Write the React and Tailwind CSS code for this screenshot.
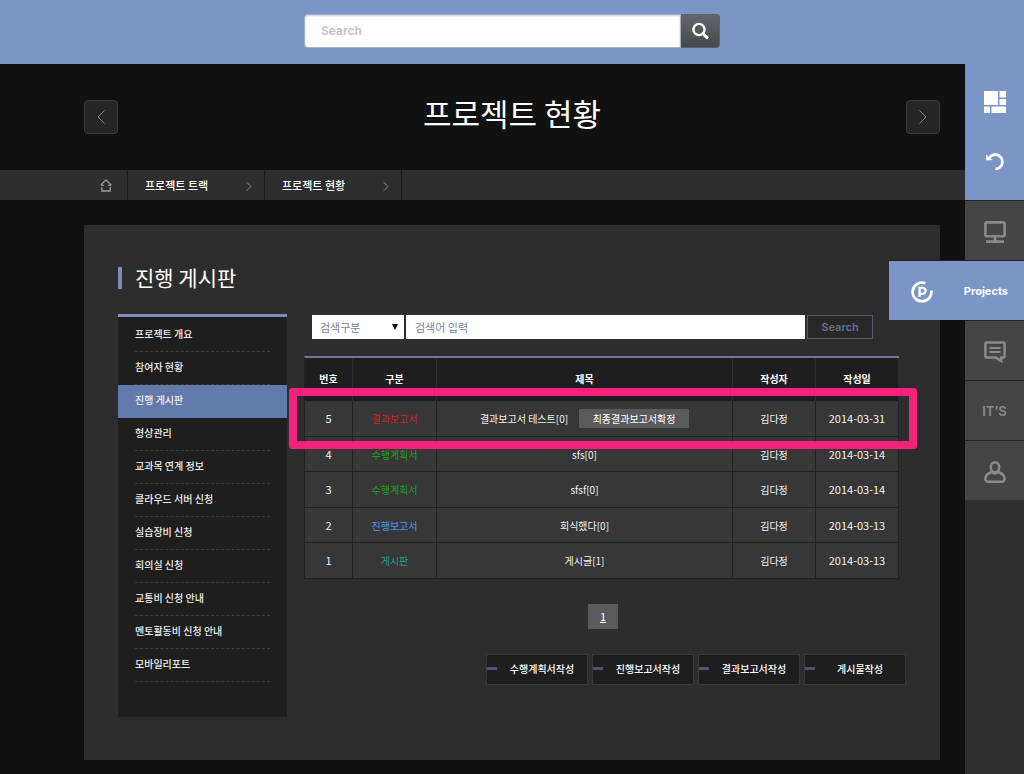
import React from "react";

const MENU = [
  "프로젝트 개요",
  "참여자 현황",
  "진행 게시판",
  "형상관리",
  "교과목 연계 정보",
  "클라우드 서버 신청",
  "실습장비 신청",
  "회의실 신청",
  "교통비 신청 안내",
  "멘토활동비 신청 안내",
  "모바일리포트",
];

const ROWS = [
  { no: 5, kind: "결과보고서", color: "text-[#d62020]", title: "결과보고서 테스트[0]", badge: "최종결과보고서확정", writer: "김다정", date: "2014-03-31" },
  { no: 4, kind: "수행계획서", color: "text-[#1fa01f]", title: "sfs[0]", writer: "김다정", date: "2014-03-14" },
  { no: 3, kind: "수행계획서", color: "text-[#1fa01f]", title: "sfsf[0]", writer: "김다정", date: "2014-03-14" },
  { no: 2, kind: "진행보고서", color: "text-[#4a9cf0]", title: "회식했다[0]", writer: "김다정", date: "2014-03-13" },
  { no: 1, kind: "게시판", color: "text-[#1f9c9c]", title: "게시글[1]", writer: "김다정", date: "2014-03-13" },
];

const ACTIONS = ["수행계획서작성", "진행보고서작성", "결과보고서작성", "게시물작성"];

function Chevron({ left, className }) {
  return (
    <svg viewBox="0 0 8 14" className={className} fill="none" stroke="currentColor" aria-hidden="true">
      <path d={left ? "M7.5 0.5 L1 7 L7.5 13.5" : "M0.5 0.5 L7 7 L0.5 13.5"} vectorEffect="non-scaling-stroke" />
    </svg>
  );
}

function Header() {
  return (
    <header className="flex h-[64px] shrink-0 justify-center bg-[#7a95c6] pt-[14px]">
      <form className="flex h-[34px] w-[416px]" role="search" onSubmit={(e) => e.preventDefault()}>
        <input
          type="text"
          aria-label="Search"
          placeholder="Search"
          className="min-w-0 flex-1 rounded-l border border-[#a9b2c4] bg-white px-4 text-[12px] font-semibold text-gray-600 shadow-[inset_0_1px_2px_rgba(0,0,0,0.2)] outline-none placeholder:text-[#c2c2c8]"
        />
        <button
          type="submit"
          aria-label="Submit search"
          className="flex w-[39px] items-center justify-center rounded-r border border-l-0 border-[#5c616a] bg-linear-to-b from-[#646669] to-[#45484b] text-white"
        >
          <svg viewBox="0 0 18 18" className="size-[18px]" fill="none" stroke="currentColor" aria-hidden="true">
            <circle cx="8" cy="7.5" r="5.6" strokeWidth="2.4" />
            <path d="M12.1 11.6 L16 15.6" strokeWidth="3" strokeLinecap="round" />
          </svg>
        </button>
      </form>
    </header>
  );
}

function TitleBar() {
  const btn = "flex size-[34px] items-center justify-center rounded border border-[#3d3d3d] bg-[#262626] text-[#858585]";
  return (
    <div className="flex h-[106px] items-center justify-between pr-[25px] pl-[84px]">
      <button aria-label="이전" className={btn}>
        <Chevron left className="h-[14px] w-[8px]" />
      </button>
      <h1 className="pb-2 text-[31px] leading-[44px] text-white">프로젝트 현황</h1>
      <button aria-label="다음" className={btn}>
        <Chevron className="h-[14px] w-[8px]" />
      </button>
    </div>
  );
}

function Crumb({ label }) {
  return (
    <a
      href="#"
      className="flex w-[137px] items-center justify-between border-r border-[#1a1a1a] pr-[12px] pl-[17px] text-[11px] font-medium text-white"
    >
      {label}
      <Chevron className="mt-[3px] h-[9px] w-[6px] text-[#8a8a8a]" />
    </a>
  );
}

function Breadcrumb() {
  return (
    <nav aria-label="위치" className="flex h-[30px] bg-[#2e2e2e] pl-[84px]">
      <a href="#" aria-label="홈" className="flex w-[44px] items-center justify-center border-r border-[#1a1a1a] text-[#999]">
        <svg viewBox="0 0 12 13" className="h-[13px] w-[12px]" fill="none" stroke="currentColor" strokeWidth="1.3" aria-hidden="true">
          <path d="M0.8 6 L6 1 L11.2 6 M0.8 6.4 H3.8 M8.2 6.4 H11.2 M1.8 8 V12 H10.2 V8" />
        </svg>
      </a>
      <Crumb label="프로젝트 트랙" />
      <Crumb label="프로젝트 현황" />
    </nav>
  );
}

function SideMenu() {
  return (
    <nav aria-label="프로젝트 메뉴" className="w-[169px] shrink-0 border-t-[3px] border-[#7b8db8] bg-[#1e1e1e] pt-[2px] pb-[35px]">
      <ul>
        {MENU.map((label) => {
          const active = label === "진행 게시판";
          return (
            <li key={label} className={active ? "bg-[#6179ab] px-[17px]" : "px-[17px]"}>
              <a
                href="#"
                aria-current={active ? "page" : undefined}
                className={
                  "flex h-[33px] items-center border-b border-dashed pb-[3px] text-[10px] font-medium text-[#f0f0f0] " +
                  (active ? "border-transparent" : "border-[#3c3c3c]")
                }
              >
                {label}
              </a>
            </li>
          );
        })}
      </ul>
    </nav>
  );
}

function SearchRow() {
  return (
    <form className="flex h-[24px] gap-[2px] pr-[33px] pl-[8px] text-[11px]" onSubmit={(e) => e.preventDefault()}>
      <div className="relative w-[92px]">
        <select aria-label="검색구분" className="h-full w-full appearance-none bg-white pl-[8px] text-[#7b8490] outline-none">
          <option>검색구분</option>
        </select>
        <svg viewBox="0 0 6 6" className="pointer-events-none absolute top-[9px] right-[6px] size-[6px] fill-black" aria-hidden="true">
          <path d="M0 0 H6 L3 6 Z" />
        </svg>
      </div>
      <input
        type="text"
        aria-label="검색어 입력"
        placeholder="검색어 입력"
        className="min-w-0 flex-1 bg-white px-[9px] text-gray-700 outline-none placeholder:text-[#7b8490]"
      />
      <button
        type="submit"
        className="w-[66px] border border-[#5a5a6c] bg-[#28282a] font-[Inter,sans-serif] text-[11px] font-semibold text-[#6e6e84]"
      >
        Search
      </button>
    </form>
  );
}

function Board() {
  const cell = "border-r border-b border-[#222] p-0";
  const head = "border-r border-[#2c2c2c] p-0 pb-[3px] font-bold";
  return (
    <div className="relative mt-[17px] mr-[7px]">
      <table className="w-full table-fixed border-separate border-spacing-0 border-t-2 border-l border-t-[#6d7ba0] border-l-[#222] text-center text-[10px] text-[#f2f2f2]">
        <colgroup>
          <col className="w-[48px]" />
          <col className="w-[84px]" />
          <col />
          <col className="w-[83px]" />
          <col className="w-[83px]" />
        </colgroup>
        <thead className="bg-[#1e1e1e] text-white">
          <tr className="h-[43px]">
            <th scope="col" className={head}>번호</th>
            <th scope="col" className={head}>구분</th>
            <th scope="col" className={head}>제목</th>
            <th scope="col" className={head}>작성자</th>
            <th scope="col" className={head}>작성일</th>
          </tr>
        </thead>
        <tbody className="bg-[#373737]">
          {ROWS.map((r) => (
            <tr key={r.no} className="odd:h-[36px] even:h-[35px]">
              <td className={cell + " text-[11px]"}>{r.no}</td>
              <td className={cell + " " + r.color}>{r.kind}</td>
              <td className={cell}>
                <div className="flex items-center justify-center gap-[11px]">
                  <a href="#">{r.title}</a>
                  {r.badge && (
                    <span className="flex h-[19px] w-[110px] items-center justify-center bg-[#5a5a5a] text-white">{r.badge}</span>
                  )}
                </div>
              </td>
              <td className={cell}>{r.writer}</td>
              <td className={cell + " text-[11px]"}>{r.date}</td>
            </tr>
          ))}
        </tbody>
      </table>
      <div className="pointer-events-none absolute top-[32px] -right-[18px] -left-[15px] h-[61px] rounded-[3px] border-8 border-[#f4227a]" />
    </div>
  );
}

function BoardFooter() {
  return (
    <>
      <div className="mt-[25px] flex justify-center pr-[4px]">
        <a href="#" aria-current="page" className="flex h-[25px] w-[30px] items-center justify-center bg-[#5a5a5a] text-[11px] text-white underline">
          1
        </a>
      </div>
      <div className="mt-[25px] flex justify-end gap-[4px]">
        {ACTIONS.map((label) => (
          <button
            key={label}
            className="flex h-[31px] w-[102px] items-center border border-[#3a3a3a] bg-[#1e1e1e] pb-[2px] text-[10px] font-medium text-white"
          >
            <span className="h-[3px] w-[10px] bg-[#46557a]" />
            <span className="flex-1 text-center">{label}</span>
          </button>
        ))}
      </div>
    </>
  );
}

function Rail() {
  const item = "flex h-[60px] w-full items-center justify-center border-t border-[#222] bg-[#454545] pt-[2px] text-[#8a8a8a]";
  return (
    <aside className="flex w-[59px] shrink-0 flex-col bg-[#303030]">
      <div className="flex h-[136px] flex-col items-center bg-[#7a95c6] text-white">
        <a href="#" aria-label="대시보드" className="flex h-[60px] w-full items-center justify-center pt-[16px]">
          <svg viewBox="0 0 22 22" className="size-[22px]" fill="currentColor" aria-hidden="true">
            <path d="M0 0H14V14H0Z M15.5 0H22V6.5H15.5Z M15.5 8H22V14H15.5Z M0 15.5H6V22H0Z M7.5 15.5H22V22H7.5Z" />
          </svg>
        </a>
        <a href="#" aria-label="뒤로" className="flex h-[60px] w-full items-center justify-center pt-[16px]">
          <svg viewBox="0 0 20 20" className="size-[20px]" fill="none" stroke="currentColor" aria-hidden="true">
            <path d="M4 6.2 C6.2 2.9 9.2 2.3 11.4 2.7 A7.2 7.2 0 0 1 10.4 17" strokeWidth="2.7" />
            <path d="M1 2.6 L1.2 8.6 L8 8 L4.6 5.8 Z" fill="currentColor" stroke="none" />
          </svg>
        </a>
      </div>
      <a href="#" aria-label="모니터" className={item}>
        <svg viewBox="0 0 22 22" className="size-[22px]" fill="none" stroke="currentColor" strokeWidth="2.6" aria-hidden="true">
          <rect x="1.4" y="1.4" width="19.2" height="13.8" rx="1.5" />
          <path d="M11 15 V20 M2 20.6 H20" />
        </svg>
      </a>
      <a
        href="#"
        className="z-10 -ml-[76px] flex h-[60px] items-center justify-between border-t border-[#222] bg-[#7a95c6] pt-[2px] pr-[16px] pl-[22px] text-[11px] font-bold text-white"
      >
        <svg viewBox="0 0 22 22" className="size-[22px]" fill="none" stroke="currentColor" aria-hidden="true">
          <path d="M14.4 2.2 A9.4 9.4 0 1 0 20.3 9.4" strokeWidth="2.7" />
          <path d="M8.6 16 V6.8 H11.6 A2.9 2.9 0 0 1 11.6 12.8 H8.6" strokeWidth="2.3" />
        </svg>
        Projects
      </a>
      <a href="#" aria-label="메시지" className={item}>
        <svg viewBox="0 0 22 22" className="size-[22px]" fill="none" stroke="currentColor" strokeWidth="2.5" aria-hidden="true">
          <path d="M2.6 1.4 H19.4 Q20.6 1.4 20.6 2.6 V15.4 Q20.6 16.6 19.4 16.6 H17.2 V20 L12 16.6 H2.6 Q1.4 16.6 1.4 15.4 V2.6 Q1.4 1.4 2.6 1.4 Z" />
          <path d="M5.5 7 H16.5 M5.5 11 H16.5" strokeWidth="2" />
        </svg>
      </a>
      <a href="#" className={item + " text-[13px] font-semibold"}>IT’S</a>
      <a href="#" aria-label="내 정보" className={item}>
        <svg viewBox="0 0 22 22" className="size-[22px]" fill="none" stroke="currentColor" strokeWidth="2.5" aria-hidden="true">
          <ellipse cx="11" cy="6.3" rx="4.2" ry="5" />
          <path d="M7.6 11 Q1.4 13.4 1.4 17.8 Q1.4 20.7 4 20.7 H18 Q20.6 20.7 20.6 17.8 Q20.6 13.4 14.4 11 Q11 13.6 7.6 11 Z" />
        </svg>
      </a>
    </aside>
  );
}

export default function App() {
  return (
    <div className="flex min-h-screen flex-col bg-[#111] font-[Inter,'Noto_Sans_CJK_KR',sans-serif]">
      <Header />
      <div className="flex flex-1">
        <main className="min-w-0 flex-1 font-['Noto_Sans_CJK_KR',sans-serif]">
          <TitleBar />
          <Breadcrumb />
          <section className="mt-[25px] mr-[25px] mb-[14px] ml-[84px] bg-[#2d2d2d] px-[34px] pt-[38px] pb-[43px]">
            <div className="flex h-[30px] items-center gap-[13px]">
              <span className="h-[22px] w-[4px] bg-[#7b8db8]" />
              <h2 className="pb-[3px] text-[21px] leading-[30px] text-white">진행 게시판</h2>
            </div>
            <div className="mt-[21px] flex gap-[17px]">
              <SideMenu />
              <div className="min-w-0 flex-1 pt-px">
                <SearchRow />
                <Board />
                <BoardFooter />
              </div>
            </div>
          </section>
        </main>
        <Rail />
      </div>
    </div>
  );
}
